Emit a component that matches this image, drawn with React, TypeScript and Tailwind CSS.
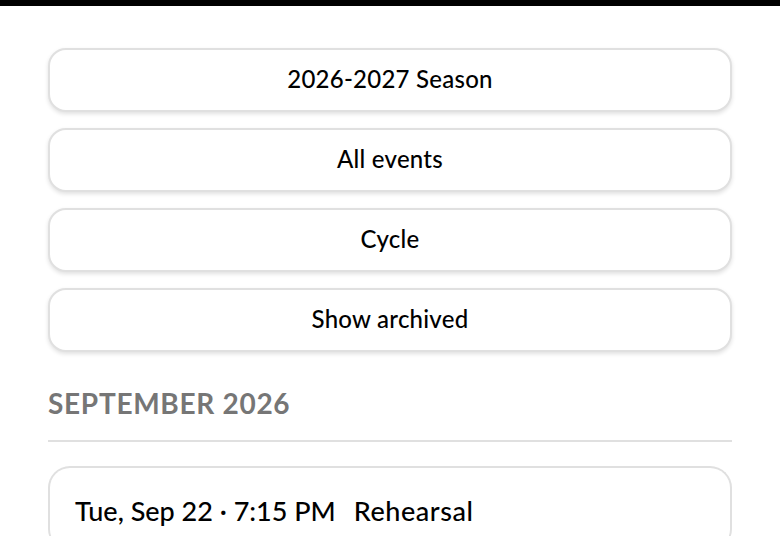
const filters = ['2026-2027 Season', 'All events', 'Cycle', 'Show archived'];

export default function App() {
  return (
    <div
      className="min-h-[536px] border-t-[6px] border-black bg-white px-12 pt-[42px] text-black"
      style={{ fontFamily: 'Lato, "Noto Sans", sans-serif' }}
    >
      <div className="flex flex-col gap-4">
        {filters.map((label) => (
          <button
            key={label}
            className="flex h-16 w-full items-center justify-center rounded-[18px] border-2 border-[#e0e0e0] bg-white pb-0.5 text-[24px] font-medium tracking-[0.01em] shadow-[0_2px_4px_rgba(0,0,0,0.12)]"
          >
            {label}
          </button>
        ))}
      </div>

      <h2 className="mt-[35px] border-b-2 border-[#e0e0e0] pb-[21px] text-[28px] font-bold leading-8 tracking-[0.025em] text-[#767676]">
        SEPTEMBER 2026
      </h2>

      <div className="mt-6 rounded-[22px] border-2 border-b-0 border-[#e0e0e0] px-[25px] pt-[27px] pb-6">
        <p className="flex items-center gap-[18px] text-[27px] font-medium leading-8">
          <span>Tue, Sep 22 · 7:15 PM</span>
          <span className="tracking-[0.02em]">Rehearsal</span>
        </p>
      </div>
    </div>
  );
}
